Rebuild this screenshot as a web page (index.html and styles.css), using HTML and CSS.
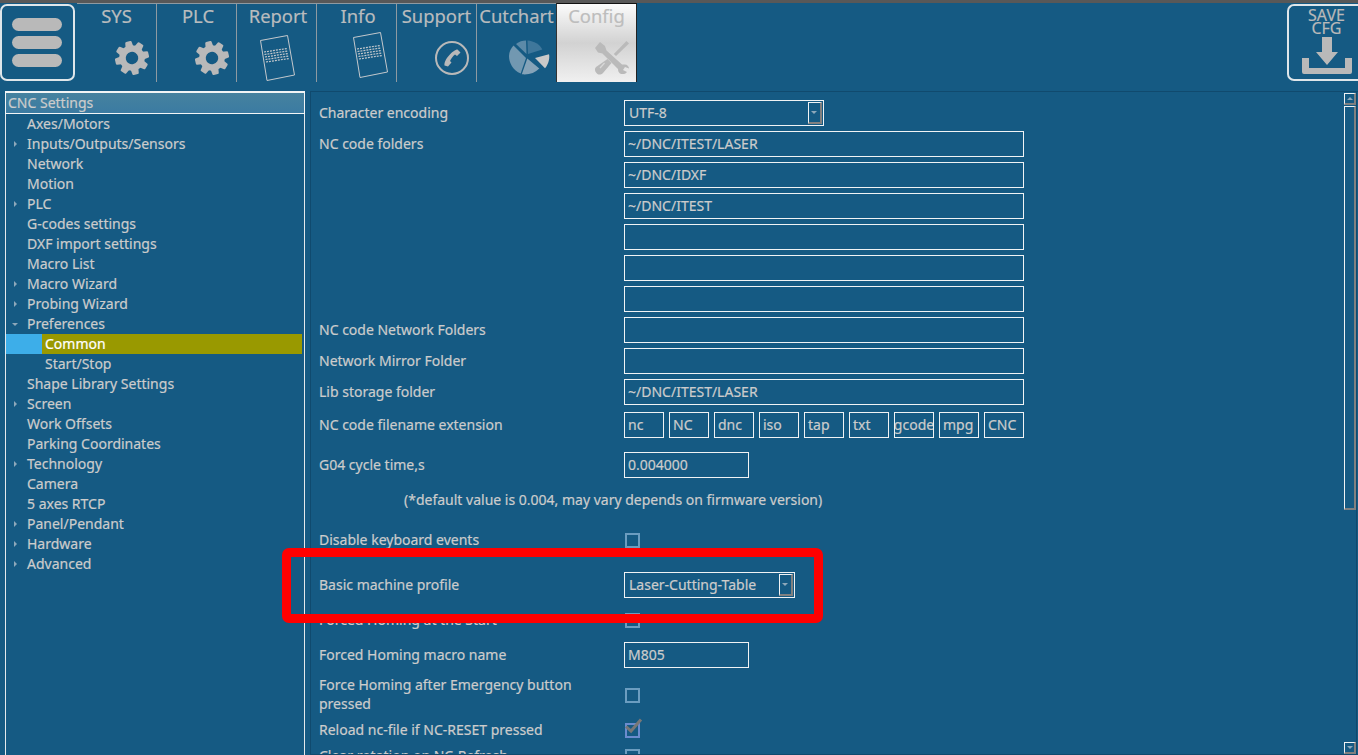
FILE: index.html
```html
<!DOCTYPE html>
<html lang="en">
<head>
<meta charset="utf-8">
<title>CNC Settings</title>
<link rel="stylesheet" href="styles.css">
</head>
<body>
<svg class="defs" width="0" height="0" aria-hidden="true">
  <symbol id="gear" viewBox="0 0 34 34">
    <g transform="rotate(-13 17 17)">
      <g fill="#b9b9b9">
        <path id="tooth" d="M13 6 13.800 0.800Q14 0 15 0H19Q20 0 20.200 0.800L21 6Z"/>
        <path d="M13 6 13.800 0.800Q14 0 15 0H19Q20 0 20.200 0.800L21 6Z" transform="rotate(45 17 17)"/>
        <path d="M13 6 13.800 0.800Q14 0 15 0H19Q20 0 20.200 0.800L21 6Z" transform="rotate(90 17 17)"/>
        <path d="M13 6 13.800 0.800Q14 0 15 0H19Q20 0 20.200 0.800L21 6Z" transform="rotate(135 17 17)"/>
        <path d="M13 6 13.800 0.800Q14 0 15 0H19Q20 0 20.200 0.800L21 6Z" transform="rotate(180 17 17)"/>
        <path d="M13 6 13.800 0.800Q14 0 15 0H19Q20 0 20.200 0.800L21 6Z" transform="rotate(225 17 17)"/>
        <path d="M13 6 13.800 0.800Q14 0 15 0H19Q20 0 20.200 0.800L21 6Z" transform="rotate(270 17 17)"/>
        <path d="M13 6 13.800 0.800Q14 0 15 0H19Q20 0 20.200 0.800L21 6Z" transform="rotate(315 17 17)"/>
      </g>
      <circle cx="17" cy="17" r="9.500" fill="none" stroke="#b9b9b9" stroke-width="6.500"/>
    </g>
  </symbol>
  <symbol id="doc" viewBox="0 0 36 46">
    <path d="M0.500 5.500 27.500 0.500 34.500 40 7 45.500Z" fill="none" stroke="#c4c8cc" stroke-width="1"/>
    <g fill="none" stroke="#c4c8cc" stroke-width="1.200" stroke-dasharray="2 1">
      <path d="M4 17 27 13.500"/>
      <path d="M4.500 19.500 27.500 16"/>
      <path d="M5 22 28 18.500"/>
      <path d="M5.500 24.500 28.500 21"/>
      <path d="M6 27 29 23.500"/>
    </g>
  </symbol>
</svg>

<header class="topbar">
  <button class="menu-btn" type="button" aria-label="Menu">
    <span class="menu-line"></span>
    <span class="menu-line"></span>
    <span class="menu-line"></span>
  </button>
  <nav class="tabs">
    <div class="tab">
      <span class="tab-label">SYS</span>
      <svg class="tab-icon gear-icon"><use href="#gear"/></svg>
    </div>
    <div class="tab tab-shift">
      <span class="tab-label">PLC</span>
      <svg class="tab-icon gear-icon"><use href="#gear"/></svg>
    </div>
    <div class="tab tab-shift">
      <span class="tab-label">Report</span>
      <svg class="tab-icon doc-icon doc-report"><use href="#doc"/></svg>
    </div>
    <div class="tab tab-shift">
      <span class="tab-label">Info</span>
      <svg class="tab-icon doc-icon"><use href="#doc"/></svg>
    </div>
    <div class="tab">
      <span class="tab-label">Support</span>
      <svg class="tab-icon gear-icon" viewBox="0 0 34 34">
        <circle cx="17" cy="17" r="16" fill="none" stroke="#b9b9b9" stroke-width="2"/>
        <path d="M9.500 24.500C9 22 11 17.500 14 14.500 17 11 20.500 8.500 22.500 8.500L25.500 11.500 22 15 20 13.500C18 15 16 17.500 15 20L16.500 21.500 13 25.500Z" fill="#b9b9b9"/>
      </svg>
    </div>
    <div class="tab">
      <span class="tab-label">Cutchart</span>
      <svg class="tab-icon pie-icon" viewBox="0 0 41 36">
        <path d="M18.500 0.500C25 1 31 4.500 33.300 9.500L19 14Z" fill="#3f779b"/>
        <path d="M7 4C10 1.500 13.500 0.500 17 0.500L17.500 14Z" fill="#5c8aa8"/>
        <path d="M4.500 5.500 17 18 11.700 33.500C4 30.500 0 23 0 16 0 12 2 8 4.500 5.500Z" fill="#7298b1"/>
        <path d="M18.300 18.500 30.300 28.500C26 33 20 35 12.800 34.300Z" fill="#85a3b8"/>
        <path d="M26 18 40 14.300C41 19 39 25 36 28.300Z" fill="#c9c9c9"/>
      </svg>
    </div>
    <div class="tab tab-active">
      <span class="tab-label">Config</span>
      <svg class="tab-icon gear-icon" viewBox="0 0 34 34">
        <g fill="#bababa">
          <path d="M31.500 0 34 2.500 21 15 18.800 13Z"/>
          <path d="M12.500 18 16.500 22 8 32C6 34 3 34 1.500 32 -0.500 30 -0.500 27.500 1 26Z"/>
          <path d="M0 7 5 1 10 5 11.500 9.500 27 23.500 30 23.500C32 23.500 34 25.500 34 27.500L30 26 28 29 32 31C30 33.500 27 33.500 25 32.500 23.500 31.500 23 29.500 23 28L7.500 12.500 3 11.500Z"/>
        </g>
        <path d="M5 27 9.500 22" stroke="#d8d8d8" stroke-width="1.200"/>
      </svg>
    </div>
  </nav>
  <button class="save-btn" type="button">
    <span class="save-text">SAVE<br>CFG</span>
    <svg class="save-icon" viewBox="0 0 50 37">
      <path d="M20 0H30V15H36L25 28 14 15H20Z" fill="#b9b9b9"/>
      <path d="M0 21H7V31H43V21H50V35Q50 37 48 37H2Q0 37 0 35Z" fill="#b9b9b9"/>
    </svg>
  </button>
</header>

<main class="main">
  <aside class="tree">
    <div class="tree-head">CNC Settings</div>
    <ul class="tree-list">
      <li class="node">Axes/Motors</li>
      <li class="node closed">Inputs/Outputs/Sensors</li>
      <li class="node">Network</li>
      <li class="node">Motion</li>
      <li class="node closed">PLC</li>
      <li class="node">G-codes settings</li>
      <li class="node">DXF import settings</li>
      <li class="node">Macro List</li>
      <li class="node closed">Macro Wizard</li>
      <li class="node closed">Probing Wizard</li>
      <li class="node open">Preferences</li>
      <li class="node child selected"><span class="sel-fill">Common</span></li>
      <li class="node child">Start/Stop</li>
      <li class="node">Shape Library Settings</li>
      <li class="node closed">Screen</li>
      <li class="node">Work Offsets</li>
      <li class="node">Parking Coordinates</li>
      <li class="node closed">Technology</li>
      <li class="node">Camera</li>
      <li class="node">5 axes RTCP</li>
      <li class="node closed">Panel/Pendant</li>
      <li class="node closed">Hardware</li>
      <li class="node closed">Advanced</li>
    </ul>
  </aside>

  <section class="panel">
    <div class="form">
      <div class="row"><label class="lbl">Character encoding</label>
        <div class="combo combo-wide"><span class="combo-text">UTF-8</span><i class="drop"></i></div></div>
      <div class="row gap5"><label class="lbl">NC code folders</label><div class="field wide">~/DNC/ITEST/LASER</div></div>
      <div class="row gap5"><label class="lbl"></label><div class="field wide">~/DNC/IDXF</div></div>
      <div class="row gap5"><label class="lbl"></label><div class="field wide">~/DNC/ITEST</div></div>
      <div class="row gap5"><label class="lbl"></label><div class="field wide"></div></div>
      <div class="row gap5"><label class="lbl"></label><div class="field wide"></div></div>
      <div class="row gap5"><label class="lbl"></label><div class="field wide"></div></div>
      <div class="row gap5"><label class="lbl">NC code Network Folders</label><div class="field wide"></div></div>
      <div class="row gap5"><label class="lbl">Network Mirror Folder</label><div class="field wide"></div></div>
      <div class="row gap5"><label class="lbl">Lib storage folder</label><div class="field wide">~/DNC/ITEST/LASER</div></div>
      <div class="row gap7"><label class="lbl">NC code filename extension</label>
        <div class="exts">
          <div class="field ext">nc</div>
          <div class="field ext">NC</div>
          <div class="field ext">dnc</div>
          <div class="field ext">iso</div>
          <div class="field ext">tap</div>
          <div class="field ext">txt</div>
          <div class="field ext ext-clip"><span>gcode</span></div>
          <div class="field ext">mpg</div>
          <div class="field ext">CNC</div>
        </div></div>
      <div class="row gap14"><label class="lbl">G04 cycle time,s</label><div class="field short">0.004000</div></div>
      <div class="row gap8 note">(*default value is 0.004, may vary depends on firmware version)</div>
      <div class="row gap15"><label class="lbl">Disable keyboard events</label><i class="check"></i></div>
      <div class="row gap19"><label class="lbl">Basic machine profile</label>
        <div class="combo combo-mid"><span class="combo-text">Laser-Cutting-Table</span><i class="drop"></i></div></div>
      <div class="row gap9"><label class="lbl">Forced Homing at the Start</label><i class="check"></i></div>
      <div class="row gap9"><label class="lbl">Forced Homing macro name</label><div class="field short">M805</div></div>
      <div class="row row-tall gap8"><label class="lbl">Force Homing after Emergency button pressed</label><i class="check"></i></div>
      <div class="row gap3"><label class="lbl">Reload nc-file if NC-RESET pressed</label>
        <i class="check checked">
          <svg class="tick" viewBox="0 0 18 16"><path d="M1 8.500 6 13 16 1.500" fill="none" stroke="#777" stroke-width="3"/></svg>
        </i></div>
      <div class="row gap0"><label class="lbl">Clear rotation on NC-Refresh</label><i class="check"></i></div>
    </div>
    <div class="scrollbar">
      <div class="sb-btn"><i class="sb-up"></i></div>
      <div class="sb-thumb"></div>
      <div class="sb-space"></div>
      <div class="sb-btn"><i class="sb-down"></i></div>
    </div>
  </section>
</main>
<div class="highlight"></div>
</body>
</html>
```
FILE: styles.css
```css
* { box-sizing: border-box; }
html, body { margin: 0; height: 755px; overflow: hidden; }
body {
  position: relative;
  background: #155a83;
  color: #cccccc;
  font-family: "Noto Sans", "Open Sans", sans-serif;
  font-size: 14px;
  border-top: 3px solid #585858;
  -webkit-text-stroke: 0.2px currentColor;
}
.defs { position: absolute; }

/* top bar */
.topbar { display: flex; height: 88px; align-items: flex-start; }
.menu-btn {
  width: 75px; height: 77px; margin-top: 1px; padding: 0 11px 0 10px;
  display: flex; flex-direction: column; justify-content: center; gap: 5px;
  background: #155a83; border: 2px solid #dfe6ea; border-radius: 7px;
}
.menu-line { display: block; height: 13px; border-radius: 7px; background: #b9b9b9; }
.tabs { display: flex; margin-left: 2px; }
.tab {
  width: 80px; height: 79px; position: relative;
  display: flex; flex-direction: column; align-items: flex-end;
  border-top: 1px solid #8e9aa2; border-right: 1px solid #8e9aa2;
}
.tab-label {
  align-self: stretch; text-align: center; font-size: 18.4px; line-height: 24px;
  color: #b9bcbe; white-space: nowrap;
}
.tab-shift .tab-label { padding-left: 3px; }
.tab-icon { display: block; fill: none; overflow: visible; }
.gear-icon { width: 34px; height: 34px; margin: 13px 7px 0 0; }
.doc-icon { width: 36px; height: 46px; margin: 4px 7px 0 0; }
.doc-report { margin-right: 20px; margin-top: 7px; }
.pie-icon { width: 41px; height: 36px; margin: 12px 6px 0 0; }
.tab-active {
  width: 81px; margin-left: -1px;
  border-top: 1px solid #111; border-left: 1px solid #333; border-right: 1px solid #222;
  background: linear-gradient(#fbfbfb, #d2d2d2 50%, #f0f0f0);
}
.tab-active .tab-label { color: #bdbdbd; }
.save-btn {
  width: 71px; height: 77px; margin: 1px 0 0 auto; padding: 0;
  display: flex; flex-direction: column; align-items: center;
  background: #155a83; border: 2px solid #dfe6ea; border-right: 0; border-radius: 7px 0 0 7px;
  color: #b9b9b9; font: 16px/13px "Noto Sans", sans-serif;
}
.save-text { padding-top: 3px; height: 31px; margin-left: 6px; }
.save-icon { width: 50px; height: 37px; margin-left: 6px; }

/* main */
.main { display: flex; height: 664px; padding-left: 5px; }
.tree { width: 300px; flex: none; border-left: 1px solid #e4e9ec; border-right: 1px solid #e4e9ec; }
.tree-head {
  height: 23px; margin-left: -1px; margin-right: -1px; padding-left: 2px;
  border: 1px solid #f2f5f6; border-width: 2px 1px 1px 1px;
  background: linear-gradient(#45829f, #3b7ba2); line-height: 19px;
}
.tree-list { list-style: none; margin: 0; padding: 0; }
.node { height: 20px; line-height: 20px; padding-left: 21px; position: relative; white-space: nowrap; }
.node.child { padding-left: 39px; }
.node.closed::before {
  content: ""; position: absolute; left: 8px; top: 7px;
  border-left: 3px solid #8ea8ba; border-top: 3px solid transparent; border-bottom: 3px solid transparent;
}
.node.open::before {
  content: ""; position: absolute; left: 6px; top: 9px;
  border-top: 3px solid #8ea8ba; border-left: 3px solid transparent; border-right: 3px solid transparent;
}
.node.selected { padding-left: 36px; margin-right: 2px; background: #3daee9; }
.sel-fill { display: block; height: 20px; padding-left: 3px; background: #999900; color: #fff; }

/* right panel */
.panel {
  margin-left: 5px; flex: 1; display: flex; min-width: 0; height: 664px; overflow: hidden;
  border-top: 1px solid #104a6e; border-left: 1px solid #104a6e; border-bottom: 1px solid #104a6e;
}
.form { flex: 1; padding: 8px 0 0 8px; min-width: 0; }
.row { display: flex; align-items: center; height: 26px; }
.row-tall { height: 38px; }
.gap0 { margin-top: 0; } .gap3 { margin-top: 3px; } .gap5 { margin-top: 5px; } .gap7 { margin-top: 7px; }
.gap8 { margin-top: 8px; } .gap9 { margin-top: 9px; } .gap14 { margin-top: 14px; } .gap15 { margin-top: 15px; } .gap19 { margin-top: 19px; }
.lbl { width: 305px; flex: none; padding: 0 50px 2px 0; line-height: 19px; }
.note { padding-left: 85px; font-size: 14px; }
.field {
  height: 26px; line-height: 24px; padding: 0 3px; flex: none;
  border: 1px solid #f0f3f5; white-space: nowrap; overflow: hidden;
}
.wide { width: 400px; }
.short { width: 125px; }
.exts { display: flex; gap: 5px; }
.ext { width: 40px; }
.ext-clip { padding: 0; display: flex; justify-content: center; }
.combo {
  height: 26px; display: flex; align-items: center; justify-content: space-between;
  padding: 0 1px 0 4px; border: 1px solid #f0f3f5; flex: none;
}
.combo-text { padding-bottom: 2px; }
.combo-wide { width: 200px; }
.combo-mid { width: 171px; }
.drop {
  width: 14px; height: 22px; position: relative; display: block;
  border: 1px solid #f0f3f5; border-right: 2px solid #808080; border-bottom: 2px solid #808080;
}
.drop::after {
  content: ""; position: absolute; left: 2px; top: 8px;
  border-top: 3px solid #8ea8ba; border-left: 3px solid transparent; border-right: 3px solid transparent;
}
.check {
  display: block; width: 15px; height: 15px; margin-left: 1px; position: relative;
  border: 2px solid #6b9dc0;
}
.checked { border-color: #6b8cce; }
.tick { position: absolute; left: -2px; top: -7px; width: 18px; height: 16px; }

/* scrollbar */
.scrollbar {
  width: 13px; flex: none; margin-right: 1px; padding-top: 1px;
  display: flex; flex-direction: column; border-right: 1px solid #104a6e;
}
.sb-btn {
  height: 12px; flex: none; position: relative;
  border: 1px solid #f0f3f5; border-right: 2px solid #808080; border-bottom: 2px solid #808080;
}
.sb-up::after, .sb-down::after { content: ""; position: absolute; left: 2px; top: 3px; border-left: 3px solid transparent; border-right: 3px solid transparent; }
.sb-up::after { border-bottom: 3px solid #8ea8ba; }
.sb-down::after { border-top: 3px solid #8ea8ba; }
.sb-thumb {
  height: 404px; margin-top: 1px; flex: none;
  border: 1px solid #f0f3f5; border-right: 2px solid #808080; border-bottom: 2px solid #808080;
}
.sb-space { flex: 1; }

/* annotation over the screenshot */
.highlight {
  position: absolute; left: 282px; top: 545px; width: 541px; height: 75px;
  border: 9px solid #ff0000; border-radius: 7px;
}
```
